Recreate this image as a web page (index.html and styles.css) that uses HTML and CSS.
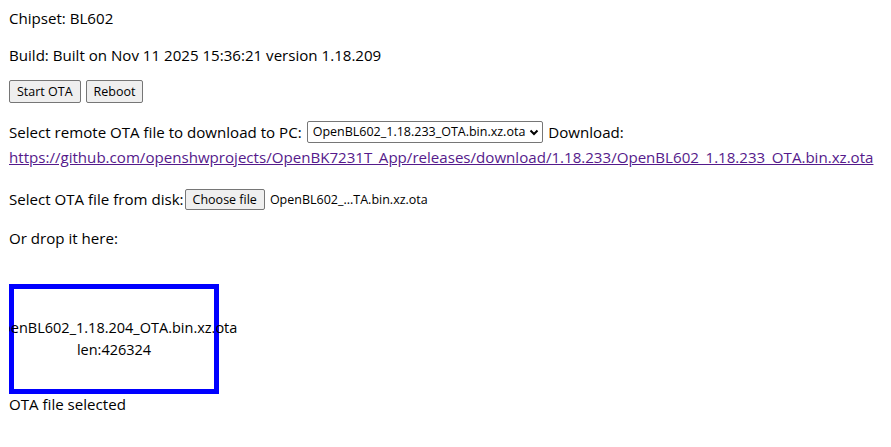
FILE: index.html
```html
<!DOCTYPE html>
<html>
<head>
<meta charset="utf-8">
<link rel="stylesheet" href="styles.css">
</head>
<body>
<p class="line">Chipset: BL602</p>
<p class="line build">Build: Built on Nov 11 2025 15:36:21 version 1.18.209</p>
<div class="btnrow"><button class="btn">Start OTA</button><button class="btn">Reboot</button></div>
<div class="remote">
  <div class="remote-row">Select remote OTA file to download to PC:<span class="select">OpenBL602_1.18.233_OTA.bin.xz.ota<svg class="chev" width="10" height="7" viewBox="0 0 10 7"><path d="M1.5 1.5 L5 5 L8.5 1.5" fill="none" stroke="#000" stroke-width="2"/></svg></span>Download:</div>
  <div class="link-row"><a class="link" href="#">https://github.com/openshwprojects/OpenBK7231T_App/releases/download/1.18.233/OpenBL602_1.18.233_OTA.bin.xz.ota</a></div>
</div>
<div class="disk">Select OTA file from disk:<span class="filebtn">Choose file</span><span class="fname">OpenBL602_...TA.bin.xz.ota</span></div>
<div class="drop-label">Or drop it here:</div>
<div class="dropzone"><div class="dropinner">OpenBL602_1.18.204_OTA.bin.xz.ota<br>len:426324</div></div>
<div class="status">OTA file selected</div>
</body>
</html>
```
FILE: styles.css
```css
html, body { background: #fff; }
body {
  margin: 8px 9px;
  font-family: "Open Sans", sans-serif;
  font-size: 15.1px;
  line-height: 21px;
  color: #000;
}
.line { margin: 0 0 16px 0; }
.build { margin-bottom: 14px; }
.btnrow { margin: 0 0 16px 0; height: 23px; display: flex; gap: 5px; }
.btn {
  font-family: "Open Sans", sans-serif;
  font-size: 12.5px;
  height: 23px;
  padding: 0 7px;
  border: 1px solid #767676;
  border-radius: 2px;
  background: #efefef;
  color: #000;
  margin: 0;
}
.remote { margin-bottom: 16px; }
.remote-row {
  display: flex;
  align-items: center;
  height: 26px;
  gap: 5px;
  white-space: nowrap;
}
.select {
  display: inline-flex;
  align-items: center;
  gap: 4px;
  font-size: 12.5px;
  border: 1px solid #767676;
  border-radius: 2px;
  padding: 0 3px 0 5px;
  height: 22px;
  line-height: 20px;
  box-sizing: border-box;
}
.chev { display: block; }
.link-row { line-height: 24px; }
.link { color: #551a8b; }
.disk {
  display: flex;
  align-items: center;
  height: 29px;
  white-space: nowrap;
}
.filebtn {
  display: inline-block;
  font-size: 12.5px;
  border: 1px solid #767676;
  border-radius: 2px;
  background: #efefef;
  padding: 0 7px;
  height: 21px;
  line-height: 19px;
  box-sizing: border-box;
  margin: 0 5px 0 1px;
}
.fname { font-size: 12.5px; }
.drop-label { margin-top: 14px; margin-bottom: 35px; }
.dropzone {
  width: 200px;
  height: 100px;
  border: 5px solid #0000ff;
  display: flex;
  justify-content: center;
  align-items: center;
  line-height: 22px;
  font-size: 14.5px;
}
.dropinner { text-align: center; white-space: nowrap; }
.status { font-size: 15.1px; }
```
